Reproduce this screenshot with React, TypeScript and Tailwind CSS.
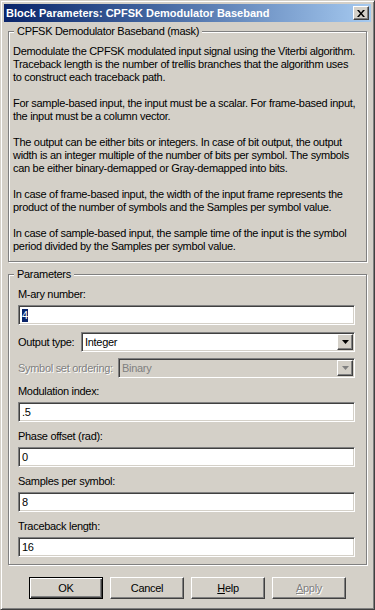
import React from 'react';

const font = { fontFamily: '"Liberation Sans", Arial, sans-serif' };

const paragraphs = [
  [
    'Demodulate the CPFSK modulated input signal using the Viterbi algorithm.',
    'Traceback length is the number of trellis branches that the algorithm uses',
    'to construct each traceback path.',
  ],
  [
    'For sample-based input, the input must be a scalar. For frame-based input,',
    'the input must be a column vector.',
  ],
  [
    'The output can be either bits or integers. In case of bit output, the output',
    'width is an integer multiple of the number of bits per symbol. The symbols',
    'can be either binary-demapped or Gray-demapped into bits.',
  ],
  [
    'In case of frame-based input, the width of the input frame represents the',
    'product of the number of symbols and the Samples per symbol value.',
  ],
  [
    'In case of sample-based input, the sample time of the input is the symbol',
    'period divided by the Samples per symbol value.',
  ],
];

const sunken =
  'border border-t-[#808080] border-l-[#808080] border-r-white border-b-white shadow-[inset_1px_1px_0_#404040,inset_-1px_-1px_0_#d4d0c8]';
const raised =
  'border border-t-white border-l-white border-r-[#404040] border-b-[#404040] shadow-[inset_-1px_-1px_0_#808080] bg-[#d4d0c8]';
const disabledText = 'text-[#808080] [text-shadow:1px_1px_0_#fff]';

function Field({ label, value, selected }: { label: string; value: string; selected?: boolean }) {
  return (
    <div className="flex flex-col">
      <div className="h-[13px] leading-[13px] mb-[4px]">{label}</div>
      <div className={`${sunken} bg-white h-[20px] flex items-center pl-[3px]`}>
        {selected ? <span className="bg-[#0a246a] text-white leading-[13px]">{value}</span> : value}
      </div>
    </div>
  );
}

function Arrow({ disabled }: { disabled?: boolean }) {
  return (
    <div className={`${raised} w-[16px] h-full flex items-center justify-center`}>
      <svg width="7" height="4" viewBox="0 0 7 4">
        <path d="M0 0h7L3.5 4z" fill={disabled ? '#808080' : '#000'} />
      </svg>
    </div>
  );
}

function Select({ label, value, labelW, disabled }: { label: string; value: string; labelW: string; disabled?: boolean }) {
  return (
    <div className="flex items-center h-[20px]">
      <div className={`${labelW} shrink-0 leading-[13px] ${disabled ? disabledText : ''}`}>{label}</div>
      <div
        className={`${sunken} ${disabled ? 'bg-[#d4d0c8]' : 'bg-white'} flex-1 h-[20px] flex items-center justify-between pl-[3px]`}
      >
        <span className={disabled ? 'text-[#808080]' : ''}>{value}</span>
        <div className="h-full p-[1px] flex">
          <Arrow disabled={disabled} />
        </div>
      </div>
    </div>
  );
}

function Btn({ children, def, disabled }: { children: React.ReactNode; def?: boolean; disabled?: boolean }) {
  const frame = def
    ? 'border border-black shadow-[inset_1px_1px_0_#fff,inset_-1px_-1px_0_#404040,inset_-2px_-2px_0_#808080] bg-[#d4d0c8]'
    : raised;
  return (
    <div className={`${frame} w-[74px] h-[22px] flex items-center justify-center ${disabled ? disabledText : ''}`}>
      {children}
    </div>
  );
}

export default function App() {
  return (
    <div
      className="w-[375px] h-[610px] bg-[#d4d0c8] text-black text-[11px] tracking-[-0.3px] whitespace-nowrap border border-t-[#d4d0c8] border-l-[#d4d0c8] border-r-[#404040] border-b-[#404040] shadow-[inset_1px_1px_0_#fff,inset_-1px_-1px_0_#808080] p-[3px] flex flex-col"
      style={font}
    >
      {/* Title bar */}
      <div className="h-[18px] bg-linear-to-r from-[#0a246a] to-[#a6caf0] flex items-center justify-between pl-[2px] pr-[2px] shrink-0">
        <span className="text-white font-bold text-[11px] tracking-normal leading-[13px]">
          Block Parameters: CPFSK Demodulator Baseband
        </span>
        <div className={`${raised} w-[16px] h-[14px] flex items-center justify-center`}>
          <svg width="8" height="7" viewBox="0 0 8 7">
            <path d="M0 0h2l2 2.5L6 0h2L5 3.5 8 7H6L4 4.5 2 7H0l3-3.5z" fill="#000" />
          </svg>
        </div>
      </div>

      <div className="flex flex-col px-[4px] pt-[3px]">
        {/* Description group */}
        <fieldset className="border border-[#808080] shadow-[1px_1px_0_#fff,inset_1px_1px_0_#fff] pl-[4px] pr-[4px] pt-[7px] pb-[8px]">
          <legend className="ml-[1px] px-[3px] leading-[13px] bg-[#d4d0c8]">CPFSK Demodulator Baseband (mask)</legend>
          <div className="leading-[13px]">
            {paragraphs.map((p, i) => (
              <div key={i} className={i > 0 ? 'mt-[13px]' : ''}>
                {p.map((line) => (
                  <div key={line}>{line}</div>
                ))}
              </div>
            ))}
          </div>
        </fieldset>

        {/* Parameters group */}
        <fieldset className="mt-[6px] border border-[#808080] shadow-[1px_1px_0_#fff,inset_1px_1px_0_#fff] pl-[9px] pr-[11px] pt-[7px] pb-[7px]">
          <legend className="-ml-[4px] px-[3px] leading-[13px] bg-[#d4d0c8]">Parameters</legend>
          <div className="flex flex-col">
            <Field label="M-ary number:" value="4" selected />
            <div className="mt-[7px]">
              <Select label="Output type:" value="Integer" labelW="w-[63px]" />
            </div>
            <div className="mt-[6px]">
              <Select label="Symbol set ordering:" value="Binary" labelW="w-[100px]" disabled />
            </div>
            <div className="mt-[7px] flex flex-col gap-[8px]">
              <Field label="Modulation index:" value=".5" />
              <Field label="Phase offset (rad):" value="0" />
              <Field label="Samples per symbol:" value="8" />
              <Field label="Traceback length:" value="16" />
            </div>
          </div>
        </fieldset>

        {/* Buttons */}
        <div className="mt-[12px] flex justify-center gap-[7px]">
          <Btn def>OK</Btn>
          <Btn>Cancel</Btn>
          <Btn>
            <span>
              <span className="underline">H</span>elp
            </span>
          </Btn>
          <Btn disabled>
            <span>
              <span className="underline">A</span>pply
            </span>
          </Btn>
        </div>
      </div>
    </div>
  );
}
